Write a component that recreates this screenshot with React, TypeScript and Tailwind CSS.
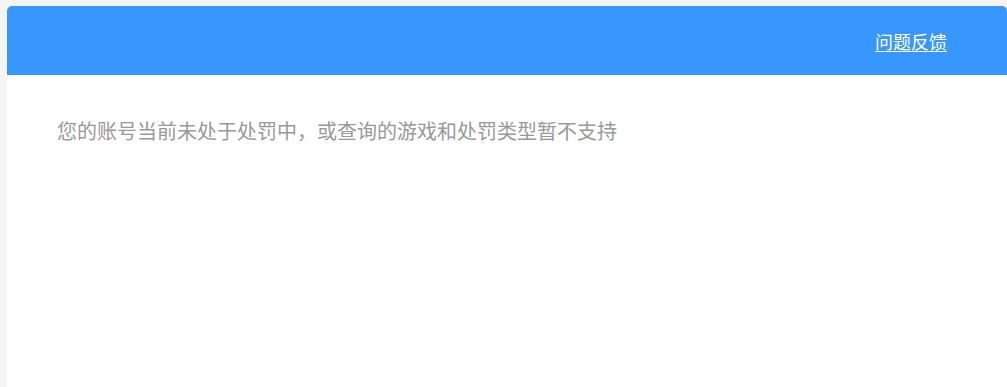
export default function App() {
  return (
    <div className="min-h-screen bg-[#f5f5f5] pl-[7px] pt-[6px] font-['Microsoft_YaHei','Noto_Sans_CJK_SC',sans-serif]">
      <div className="flex min-h-[381px] flex-col rounded-t-[5px] bg-white">
        <header className="flex h-[69px] items-center justify-end rounded-t-[5px] bg-[#3797ff] pr-[60px]">
          <a href="#" className="text-[18px] leading-[24px] text-white underline underline-offset-2">
            问题反馈
          </a>
        </header>
        <main className="px-[50px] pt-[42px]">
          <p className="text-[20px] leading-[28px] text-[#999999]">
            您的账号当前未处于处罚中，或查询的游戏和处罚类型暂不支持
          </p>
        </main>
      </div>
    </div>
  );
}
